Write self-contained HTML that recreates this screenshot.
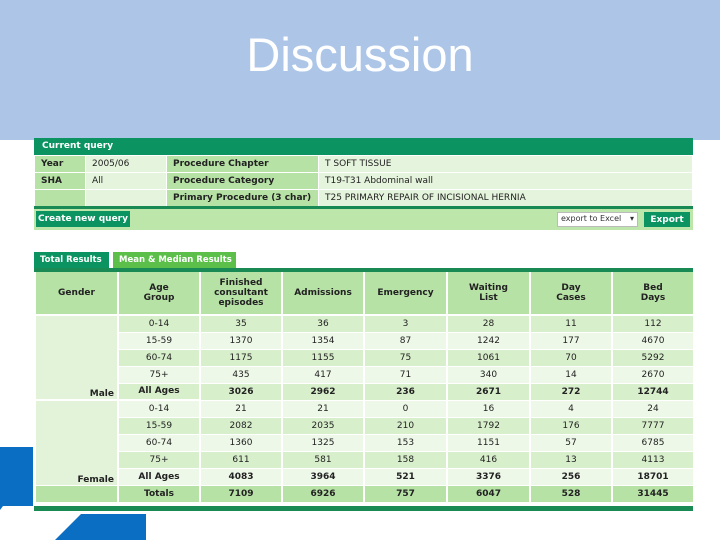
<!DOCTYPE html>
<html><head><meta charset="utf-8"><style>
*{margin:0;padding:0;box-sizing:border-box}
body{width:720px;height:540px;position:relative;background:#fff;font-family:"DejaVu Sans","Liberation Sans",sans-serif;overflow:hidden}
.band{position:absolute;left:0;top:0;width:720px;height:140px;background:#adc6e8}
.title{position:absolute;left:0;width:720px;top:27px;text-align:center;font-family:"Liberation Sans",sans-serif;font-size:47px;color:#fff}
.a{position:absolute}
.qh{left:34px;top:138px;width:659px;height:17px;background:#0b9462;color:#fff;font-size:9px;font-weight:bold;padding:3px 8px}
.q{position:absolute;left:34px;top:155px;width:659px;border-collapse:collapse;font-size:9px}
.q td{height:17px;border:1px solid #fff;padding:0 6px;color:#222;white-space:nowrap}
.q .l{background:#b7e2a6;font-weight:bold}
.q .v{background:#e5f4dc}
.bar{left:34px;top:206px;width:659px;height:24px;background:#bde6aa;border-top:3px solid #1a8a55}
.btn{background:#0b9462;color:#fff;font-size:9px;font-weight:bold;text-align:center;line-height:16px;white-space:nowrap}
.sel{left:557px;top:212px;width:81px;height:15px;background:#fff;border:1px solid #bbb;font-size:8px;padding:1px 3px;color:#333}
.tab{top:252px;height:16px;font-size:8.5px;font-weight:bold;color:#fff;line-height:16px;padding-left:6px;white-space:nowrap;overflow:hidden}
.line{left:34px;top:268px;width:659px;height:4px;background:#1a8a55}
.r{position:absolute;left:34px;top:272px;width:659px;border-collapse:collapse;font-size:9px;table-layout:fixed}
.r td{border:2px solid #fff;border-top:0;border-bottom:1px solid #fff;text-align:center;height:17px;color:#222;padding:0}
.r th{background:#b7e2a6;height:43px;border:2px solid #fff;border-top:0;font-size:9px;color:#222}
.d{background:#d8efcc}.w{background:#eef8e8}
.g{background:#e3f3da;text-align:right!important;padding-right:3px!important;vertical-align:bottom;font-weight:bold}
.b{font-weight:bold}
.t td{background:#b7e2a6;font-weight:bold}
.foot{left:34px;top:506px;width:659px;height:5px;background:#1a8a55}
</style></head><body>
<div class="band"></div>
<div class="title">Discussion</div>
<div class="a qh">Current query</div>
<table class="q">
<tr><td class="l" style="width:51px">Year</td><td class="v" style="width:81px">2005/06</td><td class="l" style="width:152px">Procedure Chapter</td><td class="v">T SOFT TISSUE</td></tr>
<tr><td class="l">SHA</td><td class="v">All</td><td class="l">Procedure Category</td><td class="v">T19-T31 Abdominal wall</td></tr>
<tr><td class="l"></td><td class="v"></td><td class="l">Primary Procedure (3 char)</td><td class="v">T25 PRIMARY REPAIR OF INCISIONAL HERNIA</td></tr>
</table>
<div class="a bar"></div>
<div class="a btn" style="left:36px;top:211px;width:94px;height:16px">Create new query</div>
<div class="a sel">export to Excel <span style="float:right">▾</span></div>
<div class="a btn" style="left:644px;top:212px;width:46px;height:15px">Export</div>
<div class="a tab" style="left:34px;width:75px;background:#0b9462">Total Results</div>
<div class="a tab" style="left:113px;width:123px;background:#5cbf4a">Mean &amp; Median Results</div>
<div class="a line"></div>
<table class="r">
<colgroup><col style="width:83px"><col style="width:82px"><col style="width:82px"><col style="width:82px"><col style="width:83px"><col style="width:83px"><col style="width:82px"><col style="width:82px"></colgroup>
<tr><th>Gender</th><th>Age<br>Group</th><th>Finished<br>consultant<br>episodes</th><th>Admissions</th><th>Emergency</th><th>Waiting<br>List</th><th>Day<br>Cases</th><th>Bed<br>Days</th></tr>
<tr class="d"><td class="g" rowspan="5" style="border-bottom:2px solid #fff">Male</td><td>0-14</td><td>35</td><td>36</td><td>3</td><td>28</td><td>11</td><td>112</td></tr>
<tr class="w"><td>15-59</td><td>1370</td><td>1354</td><td>87</td><td>1242</td><td>177</td><td>4670</td></tr>
<tr class="d"><td>60-74</td><td>1175</td><td>1155</td><td>75</td><td>1061</td><td>70</td><td>5292</td></tr>
<tr class="w"><td>75+</td><td>435</td><td>417</td><td>71</td><td>340</td><td>14</td><td>2670</td></tr>
<tr class="d b"><td style="border-bottom:2px solid #fff">All Ages</td><td>3026</td><td>2962</td><td>236</td><td>2671</td><td>272</td><td>12744</td></tr>
<tr class="w"><td class="g" rowspan="5">Female</td><td>0-14</td><td>21</td><td>21</td><td>0</td><td>16</td><td>4</td><td>24</td></tr>
<tr class="d"><td>15-59</td><td>2082</td><td>2035</td><td>210</td><td>1792</td><td>176</td><td>7777</td></tr>
<tr class="w"><td>60-74</td><td>1360</td><td>1325</td><td>153</td><td>1151</td><td>57</td><td>6785</td></tr>
<tr class="d"><td>75+</td><td>611</td><td>581</td><td>158</td><td>416</td><td>13</td><td>4113</td></tr>
<tr class="w b"><td>All Ages</td><td>4083</td><td>3964</td><td>521</td><td>3376</td><td>256</td><td>18701</td></tr>
<tr class="t"><td></td><td>Totals</td><td>7109</td><td>6926</td><td>757</td><td>6047</td><td>528</td><td>31445</td></tr>
</table>
<div class="a foot"></div>
<svg class="a" style="left:0;top:0" width="720" height="540">
<polygon points="0,447 33,447 33,506 3,506 0,510" fill="#0a6fc2"/>
<polygon points="81,514 146,514 146,540 55,540" fill="#0a6fc2"/>
</svg>
</body></html>
